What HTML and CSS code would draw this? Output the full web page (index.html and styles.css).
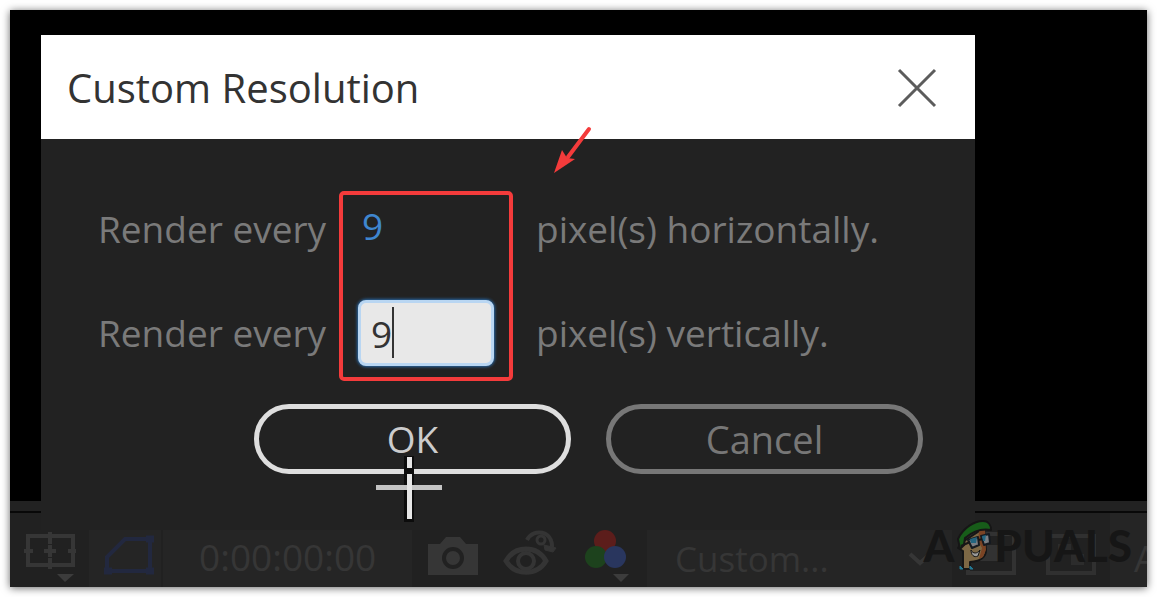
FILE: index.html
```html
<!DOCTYPE html>
<html lang="en">
<head>
    <meta charset="utf-8">
    <title>Custom Resolution</title>
    <link rel="stylesheet" href="styles.css">
</head>
<body>
    <div class="app">
        <div class="viewer">
            <div class="canvas"></div>
            <div class="divider"></div>
            <div class="toolbar">
                <div class="group group-view">
                    <button type="button" class="tool" aria-label="Grid and guides">
                        <svg width="52" height="52" viewBox="0 0 52 52" fill="none" stroke="#363636" stroke-width="4">
                            <path d="M4 5H49V34H4ZM26 1V13M26 27V38M0 20H9M44 20H52M20 20H32M26 14V26"/>
                            <path d="M33 43H50L41 51Z" fill="#3c3c3c" stroke="none"/>
                        </svg>
                    </button>
                </div>
                <div class="group group-mask">
                    <button type="button" class="tool" aria-label="Mask visibility">
                        <svg width="52" height="52" viewBox="0 0 52 52" fill="none" stroke="#22283f" stroke-width="4">
                            <path d="M4 40V26L22 8H47V40Z"/>
                            <path d="M1 40H9M43 40H51M43 8H51" stroke-width="7"/>
                        </svg>
                    </button>
                </div>
                <div class="group group-time">
                    <span class="time">0:00:00:00</span>
                </div>
                <div class="group group-snap">
                    <button type="button" class="tool" aria-label="Take snapshot">
                        <svg width="52" height="52" viewBox="0 0 52 52">
                            <path d="M1 13H13L19 6H33L39 13H51V44H1Z" fill="#363636"/>
                            <circle cx="26" cy="27" r="9" fill="none" stroke="#212121" stroke-width="4"/>
                        </svg>
                    </button>
                    <button type="button" class="tool" aria-label="Show snapshot">
                        <svg width="54" height="52" viewBox="0 0 54 52" fill="none" stroke="#343434">
                            <path d="M3 30C12 14 34 14 43 30C34 45 12 45 3 30Z" stroke-width="5"/>
                            <circle cx="23" cy="30" r="8" stroke-width="4"/>
                            <path d="M24 9C30-3 50-1 49 17" stroke-width="4"/>
                            <path d="M41 14L53 17L50 21L42 19Z" fill="#343434"/>
                            <circle cx="38" cy="9" r="4" stroke-width="3"/>
                        </svg>
                    </button>
                    <button type="button" class="tool" aria-label="Show channel">
                        <svg width="46" height="52" viewBox="0 0 46 52">
                            <circle cx="24" cy="10" r="11" fill="#5c1d1b"/>
                            <circle cx="15" cy="26" r="11" fill="#1d421d"/>
                            <circle cx="34" cy="26" r="11" fill="#29365e"/>
                            <path d="M32 43H48L40 51Z" fill="#3c3c3c"/>
                        </svg>
                    </button>
                </div>
                <div class="group group-resolution">
                    <select class="resolution" aria-label="Resolution">
                        <option>Custom...</option>
                    </select>
                    <svg class="chevron" width="24" height="14" viewBox="0 0 24 14" fill="none" stroke="#363636" stroke-width="4">
                        <path d="M2 2L12 11L22 2"/>
                    </svg>
                </div>
                <div class="group group-region">
                    <button type="button" class="tool" aria-label="Region of interest">
                        <svg width="52" height="52" viewBox="0 0 52 52">
                            <path d="M3 3H49V42H3Z" fill="none" stroke="#323232" stroke-width="4"/>
                            <path d="M15 14H37V30H15Z" fill="#323232"/>
                        </svg>
                    </button>
                    <button type="button" class="tool" aria-label="Transparency grid">
                        <svg width="52" height="52" viewBox="0 0 52 52">
                            <path d="M3 5H49V42H3Z" fill="none" stroke="#303030" stroke-width="4"/>
                            <path d="M13 13H26V23H13ZM26 23H39V34H26Z" fill="#2c2c2c"/>
                        </svg>
                    </button>
                </div>
                <div class="group group-camera">A</div>
            </div>
        </div>

        <form class="dialog">
            <div class="dialog-head">
                <h1>Custom Resolution</h1>
                <button type="button" class="close" aria-label="Close">
                    <svg width="38" height="38" viewBox="0 0 38 38" stroke="#5c5c5c" stroke-width="3">
                        <path d="M1 1L37 37M37 1L1 37"/>
                    </svg>
                </button>
            </div>
            <div class="dialog-body">
                <div class="row">
                    <label for="horizontal">Render every</label>
                    <div class="field">
                        <input type="text" id="horizontal" class="value" value="9">
                    </div>
                    <span>pixel(s) horizontally.</span>
                </div>
                <div class="row">
                    <label for="vertical">Render every</label>
                    <div class="field">
                        <input type="text" id="vertical" class="value editing" value="9">
                        <span class="caret"></span>
                    </div>
                    <span>pixel(s) vertically.</span>
                </div>
                <div class="buttons">
                    <button type="button" class="btn btn-ok">OK
                        <svg class="pointer" width="66" height="66" viewBox="0 0 66 66">
                            <path d="M28 0H38V66H28Z" fill="#0c0c0c"/>
                            <path d="M0 29H66V34H0Z" fill="#c4c4c4"/>
                            <path d="M31 1H36V12H31ZM31 18H36V63H31Z" fill="#e6e6e6"/>
                        </svg>
                    </button>
                    <button type="button" class="btn">Cancel</button>
                </div>
                <div class="highlight"></div>
                <svg class="arrow" width="38" height="48" viewBox="0 0 38 48">
                    <path d="M35 3L14 31" stroke="#f43b3b" stroke-width="4" stroke-linecap="round"/>
                    <path d="M0 47L8 24L13 32L21 33Z" fill="#f43b3b"/>
                </svg>
            </div>
        </form>

        <div class="watermark">
            <span>A</span>
            <svg width="38" height="52" viewBox="0 0 38 52" stroke-linejoin="round">
                <path d="M6 24L29 9L31 31C31 38 27 42 15 43V50H8V32L3 29Z" fill="#7d6845" stroke="#161616" stroke-width="2"/>
                <path d="M24 12L30 10L31 31L28 38L24 40L27 29L23 22Z" fill="#7b4424"/>
                <path d="M3 20C8 9 19 2 28 2C34 2 36 7 36 11C25 9 17 13 10 19L9 26L5 30Z" fill="#175c19" stroke="#161616" stroke-width="2"/>
                <path d="M13 21L23 18L24 26L17 29ZM26 17L34 15L35 24L29 26Z" fill="#7b7f84" stroke="#151a20" stroke-width="2"/>
                <path d="M15 20L22 18L21 24L16 24ZM27 17L31 16L30 22L28 22Z" fill="#236580"/>
                <path d="M6 27L15 23M24 21L27 20" fill="none" stroke="#161616" stroke-width="2"/>
                <path d="M16 31C18 35 22 35 25 31L23 37C19 39 16 36 16 31Z" fill="#9a9a9a" stroke="#161616"/>
                <path d="M5 47L8 50H5ZM15 47L18 50H15Z" fill="#237994" stroke="#237994"/>
            </svg>
            <span>PUALS</span>
        </div>
    </div>
</body>
</html>
```
FILE: styles.css
```css
*{padding: 0;margin: 0;box-sizing: border-box;}
body{
    padding: 10px;
    background: #fff;
    font-family: "Open Sans", "Noto Sans", sans-serif;
}
button,input,select{
    border: 0;
    background: none;
    font-family: inherit;
}
svg{display: block;overflow: visible;}

/* viewer and dialog share one cell, the dialog lies on top */
.app{
    position: relative;
    display: grid;
    min-height: calc(100vh - 20px);
    overflow: hidden;
    background: #000;
}
body:before{
    content: '';
    position: absolute;
    top: 10px;
    right: 10px;
    bottom: 10px;
    left: 10px;
    box-shadow: 0 1px 8px rgba(0,0,0,.6);
}
.viewer,
.dialog{
    grid-area: 1 / 1;
    min-width: 0;
}
.viewer{
    display: flex;
    flex-direction: column;
}
.canvas{
    flex: 1;
    background: #000;
}
.divider{
    height: 12px;
    background: #222;
    border-bottom: 2px solid #080808;
}

/* toolbar */
.toolbar{
    display: flex;
    height: 74px;
    background: #212121;
    color: #363636;
}
.group{
    display: flex;
    align-items: center;
    flex-shrink: 0;
    padding-top: 14px;
}
.group-view{
    width: 79px;
    padding-left: 14px;
}
.group-mask{
    width: 74px;
    padding-left: 14px;
    background: #252525;
    border-right: 2px solid #212121;
}
.group-time{
    width: 249px;
    padding-left: 36px;
    background: #252525;
}
.time{
    font-size: 37px;
    line-height: 50px;
}
.group-snap{
    width: 235px;
    gap: 24px;
    padding-left: 15px;
}
.group-resolution{
    flex: 1;
    min-width: 200px;
    padding: 18px 20px 0 28px;
    background: #252525;
}
.resolution{
    flex: 1;
    min-width: 0;
    appearance: none;
    font-size: 35px;
    line-height: 50px;
    color: #363636;
}
.group-region{
    width: 158px;
    gap: 28px;
    padding-left: 13px;
}
.group-camera{
    width: 37px;
    padding-left: 24px;
    overflow: hidden;
    background: #252525;
    font-size: 37px;
}

/* dialog */
.dialog{
    align-self: start;
    position: relative;
    margin: 25px 172px 57px 31px;
    background: #222;
}
.dialog-head{
    display: flex;
    align-items: center;
    justify-content: space-between;
    height: 104px;
    padding: 2px 39px 0 26px;
    background: #fff;
}
.dialog-head h1{
    font-size: 40px;
    font-weight: 400;
    line-height: 60px;
    color: #333;
}
.dialog-body{
    position: relative;
    display: flex;
    flex-direction: column;
    gap: 38px;
    padding: 57px 52px 56px 57px;
}
.row{
    display: grid;
    grid-template-columns: 260px 136px 1fr;
    align-items: center;
    height: 66px;
    font-size: 37px;
    line-height: 52px;
    white-space: nowrap;
    color: #7a7a7a;
}
.row > span{padding-left: 42px;}
.field{position: relative;}
.value{
    display: block;
    width: 100%;
    height: 66px;
    padding: 0 4px 8px;
    font-size: 37px;
    color: #3f86cf;
}
.editing{
    padding: 0 10px;
    border: 3px solid #b9d6f2;
    border-radius: 8px;
    background: #e8e8e8;
    box-shadow: 0 0 3px 1px #2867a4;
    color: #333;
}
.caret{
    position: absolute;
    top: 7px;
    left: 34px;
    width: 2px;
    height: 51px;
    background: #333;
}
.buttons{
    display: flex;
    justify-content: flex-end;
    gap: 35px;
}
.btn{
    position: relative;
    width: 317px;
    height: 70px;
    border: 5px solid #777;
    border-radius: 35px;
    font-size: 38px;
    line-height: 52px;
    color: #777;
}
.btn-ok{
    border-color: #dedede;
    font-size: 37px;
    color: #ccc;
}

/* marks over the dialog */
.pointer{
    position: absolute;
    top: 47px;
    left: 117px;
}
.highlight{
    position: absolute;
    top: 52px;
    left: 298px;
    width: 174px;
    height: 190px;
    border: 4px solid #f43b3b;
    border-radius: 5px;
}
.arrow{
    position: absolute;
    top: -13px;
    left: 513px;
}
.watermark{
    position: absolute;
    right: 15px;
    bottom: 16px;
    display: flex;
    align-items: center;
    gap: 1px;
    font-family: Lato, sans-serif;
    font-size: 44px;
    font-weight: 900;
    line-height: 52px;
    color: #161616;
}
```
